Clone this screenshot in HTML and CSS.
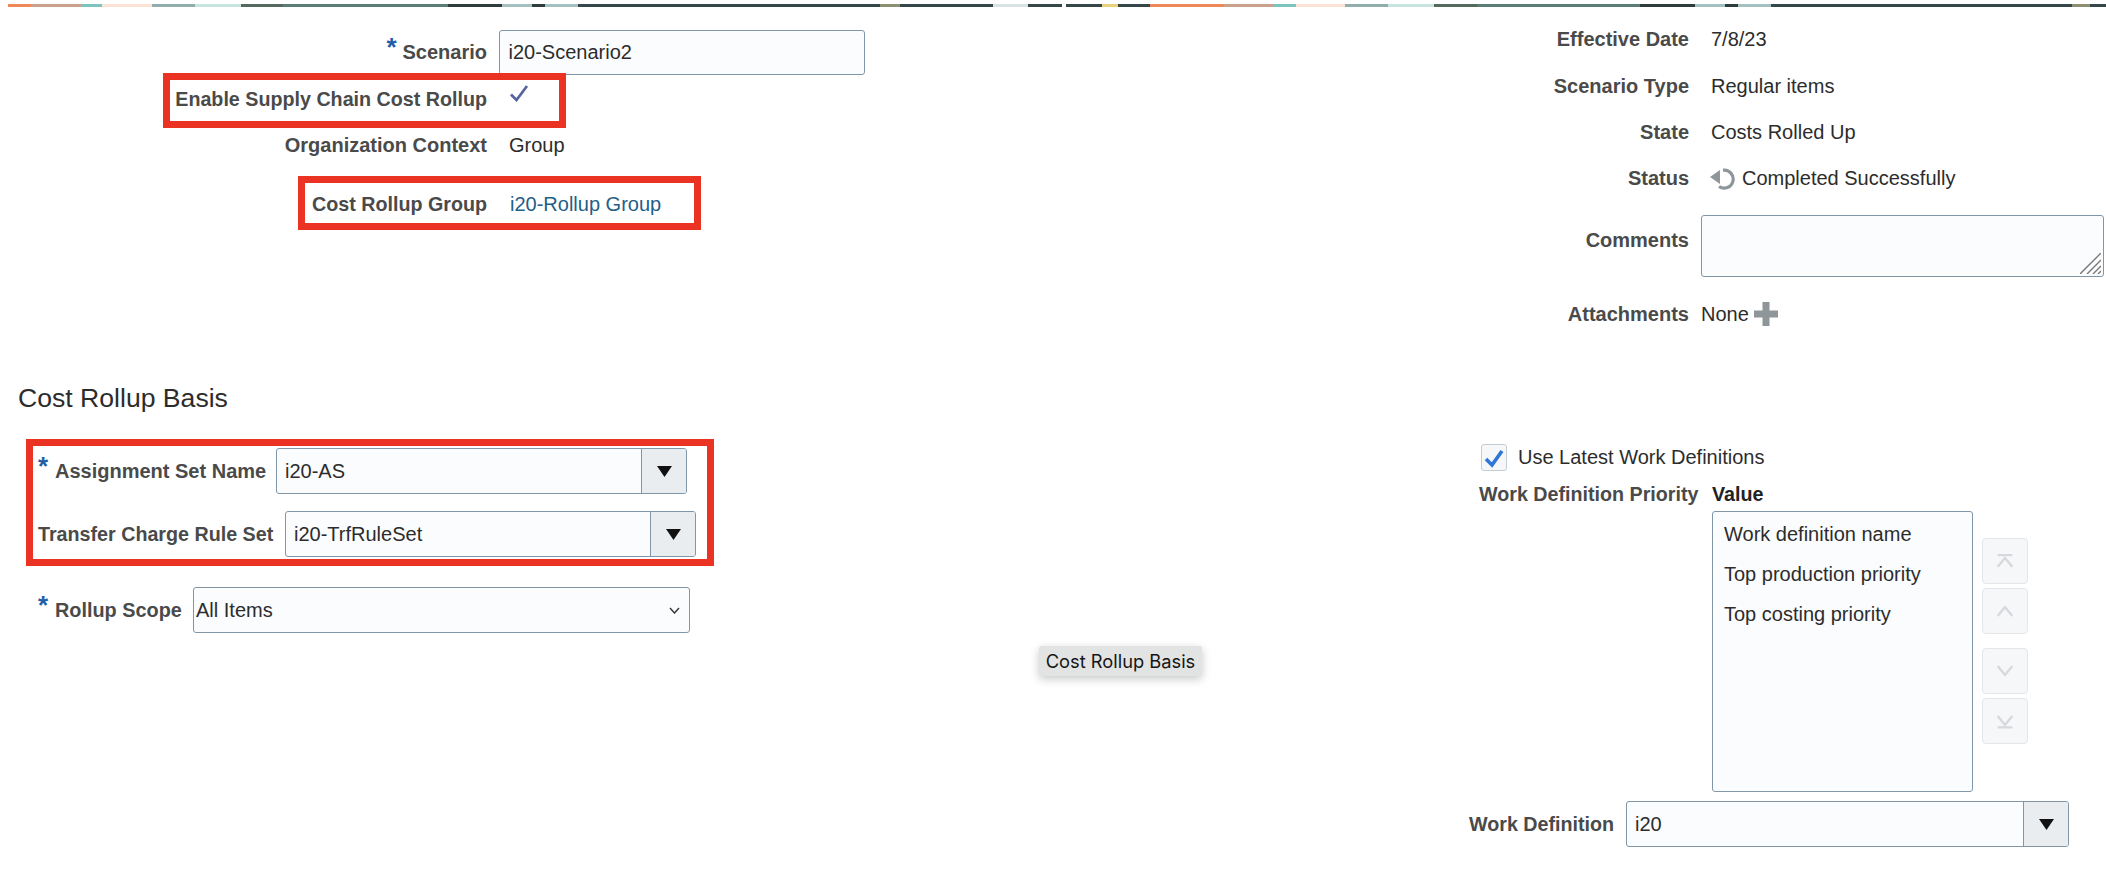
FILE: index.html
```html
<!DOCTYPE html>
<html lang="en">
<head>
<meta charset="utf-8">
<title>Cost Rollup Scenario</title>
<link rel="stylesheet" href="styles.css">
</head>
<body>
<div class="page">
  <div class="strip"></div>

  <div class="top">
    <section class="form-left">
      <div class="row">
        <div class="label"><span class="star star-inline">*</span>Scenario</div>
        <div class="field field-scenario">i20-Scenario2</div>
      </div>
      <div class="row">
        <div class="label label-tight">Enable Supply Chain Cost Rollup</div>
        <svg class="check-ro" viewBox="0 0 20 17" width="20" height="17"><path d="M2 9.5 L7.500 15 L18 1" fill="none" stroke="#55649f" stroke-width="2.700"/></svg>
      </div>
      <div class="row">
        <div class="label">Organization Context</div>
        <div class="value">Group</div>
      </div>
      <div class="row row-group">
        <div class="label label-tight">Cost Rollup Group</div>
        <a class="value link">i20-Rollup Group</a>
      </div>
    </section>

    <section class="form-right">
      <div class="row">
        <div class="label">Effective Date</div>
        <div class="value">7/8/23</div>
      </div>
      <div class="row row-type">
        <div class="label">Scenario Type</div>
        <div class="value">Regular items</div>
      </div>
      <div class="row">
        <div class="label">State</div>
        <div class="value">Costs Rolled Up</div>
      </div>
      <div class="row">
        <div class="label">Status</div>
        <div class="value status">
          <svg viewBox="0 0 28 24" width="28" height="24"><path d="M0 11 L10 4 V18 Z" fill="#8f9699"/><path d="M13 4.200 A9 9 0 1 1 9 20.500" fill="none" stroke="#8f9699" stroke-width="3.200"/></svg>
          Completed Successfully
        </div>
      </div>
      <div class="row-comments">
        <div class="label">Comments</div>
        <div class="textarea">
          <svg viewBox="0 0 21 21" width="21" height="21"><path d="M0 21 L21 0 M7 21 L21 7 M13 21 L21 13 M18 21 L21 18" stroke="#777" stroke-width="1.400" fill="none"/></svg>
        </div>
      </div>
      <div class="row row-attach">
        <div class="label">Attachments</div>
        <div class="none">None</div>
        <svg class="plus" viewBox="0 0 24 24" width="24" height="24"><path d="M8.500 0 H15.500 V8.500 H24 V15.500 H15.500 V24 H8.500 V15.500 H0 V8.500 H8.500 Z" fill="#8f9699"/></svg>
      </div>
    </section>
  </div>

  <h2 class="heading">Cost Rollup Basis</h2>

  <div class="basis">
    <section class="basis-left">
      <div class="brow">
        <div class="blabel blabel-assign"><span class="star">*</span>Assignment Set Name</div>
        <div class="combo">
          <div class="combo-text">i20-AS</div>
          <div class="combo-btn"><svg viewBox="0 0 15 11" width="15" height="11"><path d="M0 0 H15 L7.500 11 Z" fill="#111"/></svg></div>
        </div>
      </div>
      <div class="brow brow-transfer">
        <div class="blabel blabel-transfer">Transfer Charge Rule Set</div>
        <div class="combo">
          <div class="combo-text">i20-TrfRuleSet</div>
          <div class="combo-btn"><svg viewBox="0 0 15 11" width="15" height="11"><path d="M0 0 H15 L7.500 11 Z" fill="#111"/></svg></div>
        </div>
      </div>
      <div class="brow brow-scope">
        <div class="blabel blabel-scope"><span class="star">*</span>Rollup Scope</div>
        <div class="select">
          <span>All Items</span>
          <svg viewBox="0 0 11 7" width="11" height="7"><path d="M1 1 L5.500 6 L10 1" fill="none" stroke="#333" stroke-width="1.400"/></svg>
        </div>
      </div>
    </section>

    <section class="basis-right">
      <div class="use-latest">
        <div class="checkbox"><svg viewBox="0 0 24 24" width="24" height="24"><path d="M4 13 L10 19 L20 5" fill="none" stroke="#2f76d6" stroke-width="3.600"/></svg></div>
        <span class="value">Use Latest Work Definitions</span>
      </div>
      <div class="wd-head">
        <div class="label-plain label-priority">Work Definition Priority</div>
        <div class="col-head">Value</div>
      </div>
      <div class="list-row">
        <ul class="list">
          <li>Work definition name</li>
          <li>Top production priority</li>
          <li>Top costing priority</li>
        </ul>
        <div class="movers">
          <div class="mover"><svg viewBox="0 0 45 46" width="45" height="46"><path d="M15 17 H30 M15 29 L22.500 20 L30 29" fill="none" stroke="#d6d9dc" stroke-width="2.400"/></svg></div>
          <div class="mover"><svg viewBox="0 0 45 46" width="45" height="46"><path d="M15 28 L22.500 19 L30 28" fill="none" stroke="#d6d9dc" stroke-width="2.400"/></svg></div>
          <div class="mover mover-gap"><svg viewBox="0 0 45 46" width="45" height="46"><path d="M15 18 L22.500 27 L30 18" fill="none" stroke="#d6d9dc" stroke-width="2.400"/></svg></div>
          <div class="mover"><svg viewBox="0 0 45 46" width="45" height="46"><path d="M15 18 L22.500 27 L30 18 M15 29.500 H30" fill="none" stroke="#d6d9dc" stroke-width="2.400"/></svg></div>
        </div>
      </div>
      <div class="wd-row">
        <div class="label-plain label-wd">Work Definition</div>
        <div class="combo combo-wide">
          <div class="combo-text">i20</div>
          <div class="combo-btn"><svg viewBox="0 0 15 11" width="15" height="11"><path d="M0 0 H15 L7.500 11 Z" fill="#111"/></svg></div>
        </div>
      </div>
    </section>
  </div>

  <div class="tooltip">Cost Rollup Basis</div>
  <div class="callout callout-enable"></div>
  <div class="callout callout-group"></div>
  <div class="callout callout-basis"></div>
</div>
</body>
</html>
```
FILE: styles.css
```css
* { box-sizing: border-box; }
html, body { margin: 0; padding: 0; background: #fff; }
body { font-family: "Liberation Sans", Arial, sans-serif; font-size: 20px; color: #2c2c2c; }
.page { position: relative; width: 2106px; height: 880px; overflow: hidden; }

.strip {
  height: 3px;
  margin: 4px 0 0 8px;
  background: linear-gradient(to right,
    #f0895a 0 23px, #c9a28c 23px 73px, #7cc4bd 73px 94px, #fde2d6 94px 144px,
    #91aeac 144px 187px, #c9e3e1 187px 233px, #56695f 233px 275px, #5a7d78 275px 440px,
    #2e3d3c 440px 494px, #a5c0c0 494px 524px, #2e3d3c 524px 537px, #a5c0c0 537px 570px,
    #36474a 570px 872px, #8d8f72 872px 892px, #36474a 892px 985px, #d9e3e3 985px 1020px,
    #36474a 1020px 1054px, #fff 1054px 1058px, #36474a 1058px 1094px, #ecd07a 1094px 1110px,
    #36474a 1110px 1142px,
    #f0895a 1142px 1216px, #c9a28c 1216px 1266px, #7cc4bd 1266px 1288px, #fde2d6 1288px 1337px,
    #91aeac 1337px 1380px, #c9e3e1 1380px 1426px, #56695f 1426px 1469px, #5a7d78 1469px 1632px,
    #2e3d3c 1632px 1687px, #a5c0c0 1687px 1717px, #2e3d3c 1717px 1730px, #a5c0c0 1730px 1763px,
    #36474a 1763px 2064px, #8d8f72 2064px 2082px, #36474a 2082px 2098px);
}

.top { display: grid; grid-template-columns: 1500px 606px; height: 373px; }

.row { display: flex; align-items: center; height: 46px; }
.label { font-weight: 700; color: #4a4a4a; text-align: right; white-space: nowrap; }
.label-tight { font-size: 19.7px; }
.value { color: #2c2c2c; white-space: nowrap; }
.link { color: #1f6088; margin-left: 1px; }

.form-left { padding-top: 22px; }
.form-left .label { width: 487px; margin-right: 22px; }
.form-left .row:nth-child(2) { margin-top: 1px; }
.row-group { margin-top: 13px; }
.field { width: 366px; height: 45px; margin-left: -10px; padding: 0 8.5px; display: flex; align-items: center; background: #fbfcfe; border: 1.5px solid #8197a8; border-radius: 3px; }
.star-inline { margin-right: 6px; }
.star { color: #1f5fa8; font-size: 26px; line-height: 20px; position: relative; top: -3px; }
.check-ro { margin-top: -12px; }

.form-right { padding-top: 9px; }
.form-right .label { width: 189px; margin-right: 22px; }
.row-type { margin-top: 1px; }
.status { display: flex; align-items: center; gap: 4px; margin-left: -1px; }
.row-comments { display: flex; margin-top: 14px; }
.form-right .row-comments .label { margin-right: 12px; padding-top: 14px; }
.textarea { width: 403px; height: 62px; padding: 0 2px 2px 0; display: flex; justify-content: flex-end; align-items: flex-end; background: #fbfcfe; border: 1.5px solid #8197a8; border-radius: 3px; }
.row-attach { margin-top: 14px; }
.form-right .row-attach .label { margin-right: 12px; }
.none { margin-right: 5px; }

.heading { margin: 0 0 0 18px; height: 36px; line-height: 36px; font-size: 26.6px; font-weight: 400; color: #2c2c2c; }

.basis { display: flex; margin-top: 28px; }
.basis-left { width: 1469px; padding: 4px 0 0 38px; }
.brow { display: flex; align-items: center; height: 46px; gap: 11px; }
.brow-transfer { margin-top: 17px; }
.brow-scope { margin-top: 30px; }
.blabel { font-weight: 700; color: #4a4a4a; white-space: nowrap; }
.blabel-assign { width: 227px; }
.blabel-transfer { width: 236px; font-size: 19.7px; }
.blabel-scope { width: 144px; font-size: 19.85px; }
.blabel .star { display: inline-block; width: 17px; }
.combo { display: flex; width: 411px; height: 46px; background: #fbfcfe; border: 1.5px solid #8197a8; border-radius: 3px; overflow: hidden; }
.combo-text { flex: 1; display: flex; align-items: center; padding-left: 8px; }
.combo-btn { width: 45px; display: flex; align-items: center; justify-content: center; background: #e9edef; border-left: 1.5px solid #8197a8; }
.select { width: 497px; height: 46px; padding: 0 9px 0 2px; display: flex; align-items: center; justify-content: space-between; background: #fbfcfe; border: 1.5px solid #8197a8; border-radius: 3px; }

.basis-right { width: 637px; }
.use-latest { display: flex; align-items: center; gap: 11px; margin-left: 12px; height: 27px; }
.checkbox { width: 26px; height: 27px; display: flex; align-items: center; justify-content: center; background: #f5f7f9; border: 1.5px solid #c5cdd4; border-radius: 3px; }
.wd-head { display: flex; align-items: center; height: 26px; margin: 10px 0 0 10px; gap: 13px; }
.label-plain { font-weight: 700; font-size: 19.7px; color: #4a4a4a; white-space: nowrap; }
.label-priority { width: 220px; }
.label-wd { width: 146px; }
.col-head { font-weight: 700; font-size: 19.7px; color: #222; }
.list-row { display: flex; margin: 4px 0 0 243px; gap: 9px; }
.list { width: 261px; height: 281px; margin: 0; padding: 2px 0 0 11px; list-style: none; background: #fbfcfe; border: 1.5px solid #8197a8; border-radius: 3px; }
.list li { height: 40px; line-height: 40px; }
.movers { display: flex; flex-direction: column; gap: 4px; padding-top: 27px; }
.mover { width: 46px; height: 46px; background: #f6f7f9; border: 1.5px solid #e4e7ea; border-radius: 4px; display: flex; align-items: center; justify-content: center; }
.mover-gap { margin-top: 10px; }
.wd-row { display: flex; align-items: center; gap: 11px; margin-top: 9px; }
.combo-wide { width: 443px; }

.tooltip { position: absolute; left: 1039px; top: 646px; width: 163px; height: 30px; display: flex; align-items: center; justify-content: center; font-family: Inter, "Liberation Sans", sans-serif; font-size: 18.3px; color: #161616; background: #e2e3e3; border-radius: 3px; box-shadow: 0 3px 10px rgba(0,0,0,.22); }

.callout { position: absolute; border: 7px solid #ea3323; }
.callout-enable { left: 163px; top: 73px; width: 403px; height: 55px; }
.callout-group { left: 298px; top: 176px; width: 403px; height: 54px; }
.callout-basis { left: 26px; top: 439px; width: 688px; height: 127px; }
```
